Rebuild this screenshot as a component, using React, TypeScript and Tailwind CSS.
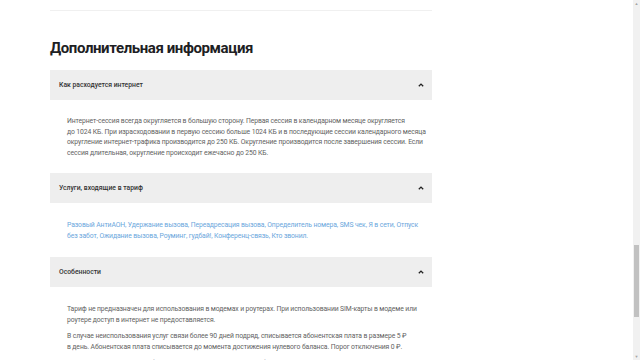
import React from 'react';

const Chevron: React.FC = () => (
    <svg width="8" height="6" viewBox="0 0 8 6" className="shrink-0">
        <polyline points="1.8,4.3 4,2.1 6.2,4.3" fill="none" stroke="#222" strokeWidth="1.3" />
    </svg>
);

const AccordionHeader: React.FC<{ title: string }> = ({ title }) => (
    <div className="flex items-center justify-between h-[30px] bg-[#eeeeee] pl-[9px] pr-[7px]">
        <span className="text-[6.8px] text-[#333333] font-medium">{title}</span>
        <Chevron />
    </div>
);

const SERVICES = [
    'Разовый АнтиАОН', 'Удержание вызова', 'Переадресация вызова', 'Определитель номера', 'SMS чек',
    'Я в сети', 'Отпуск без забот', 'Ожидание вызова', 'Роуминг', 'гудбай!', 'Конференц-связь', 'Кто звонил',
];

export default function App() {
    return (
        <div className="flex w-[640px] h-[360px] overflow-hidden bg-white" style={{ fontFamily: 'Roboto, "Noto Sans", sans-serif' }}>
            <div className="flex-1 pt-[10px]">
                <div className="ml-[50px] w-[382px]">
                    <div className="h-px bg-[#f0f0f0]" />
                    <h2 className="mt-[27px] mb-[12px] text-[15px] leading-[20px] font-bold tracking-[-0.4px] text-[#1d2023]">Дополнительная информация</h2>

                    <AccordionHeader title="Как расходуется интернет" />
                    <div className="pl-[17px] pt-[16px] pb-[15px] text-[6.8px] leading-[10.5px] tracking-[-0.1px] text-[#626262]">
                        <p>Интернет-сессия всегда округляется в большую сторону. Первая сессия в календарном месяце округляется до&nbsp;1024&nbsp;КБ. При израсходовании в первую сессию больше 1024 КБ и в последующие сессии календарного месяца округление интернет-трафика производится до 250 КБ. Округление производится после завершения сессии. Если сессия длительная, округление происходит ежечасно до 250 КБ.</p>
                    </div>

                    <AccordionHeader title="Услуги, входящие в тариф" />
                    <div className="pl-[17px] pr-[8px] pt-[17px] pb-[16px] text-[6.8px] leading-[10.5px] tracking-[-0.1px] text-[#6aa6dc]">
                        <p>
                            {SERVICES.map((s, i) => (
                                <React.Fragment key={s}>
                                    <span>{s}</span>{i < SERVICES.length - 1 ? ', ' : '.'}
                                </React.Fragment>
                            ))}
                        </p>
                    </div>

                    <AccordionHeader title="Особенности" />
                    <div className="flex flex-col gap-[6px] pl-[17px] pr-[8px] pt-[17px] text-[6.8px] leading-[10.5px] tracking-[-0.1px] text-[#626262]">
                        <p>Тариф не предназначен для использования в модемах и роутерах. При использовании SIM-карты в модеме или роутере доступ в интернет не предоставляется.</p>
                        <p>В случае неиспользования услуг связи более 90 дней подряд, списывается абонентская плата в размере 5&nbsp;₽ в&nbsp;день. Абонентская плата списывается до момента достижения нулевого баланса. Порог отключения 0&nbsp;₽.</p>
                        <p>Если ваш разговор длится более 30 минут, соединение может быть прервано.</p>
                    </div>
                </div>
            </div>

            <div className="flex flex-col w-[7px] bg-[#f1f1f1]">
                <div className="flex justify-center h-[7px] items-center text-[4px] text-[#a3a3a3]">▲</div>
                <div className="h-[238px]" />
                <div className="h-[72px] mx-[1px] bg-[#c1c1c1]" />
                <div className="flex-1" />
                <div className="flex justify-center h-[7px] items-center text-[4px] text-[#a3a3a3]">▼</div>
            </div>
        </div>
    );
}
